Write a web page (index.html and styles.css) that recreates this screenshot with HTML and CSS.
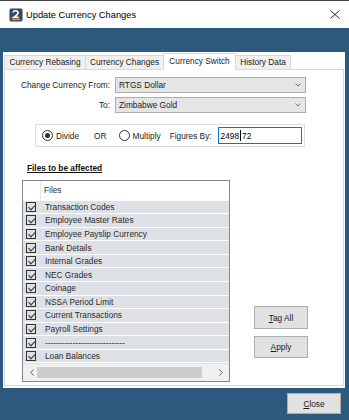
FILE: index.html
```html
<!DOCTYPE html>
<html>
<head>
    <title>Update Currency Changes</title>
    <link rel="stylesheet" href="styles.css">
</head>
<body>
    <div class="window">
        <div class="titlebar">
            <svg class="app-icon" width="14" height="14" viewBox="0 0 14 14">
                <rect x="0.5" y="0.5" width="13" height="13" rx="2" fill="#34495e" stroke="#8fa3b5"/>
                <path d="M4 4.5 Q4.5 2.5 7 2.8 Q9.6 3.2 9 5.4 Q8.4 7 5 9.2 L9.6 9.2" fill="none" stroke="#fff" stroke-width="1.6"/>
                <rect x="3" y="10.4" width="8" height="1.8" fill="#f08a24"/>
            </svg>
            <span class="title">Update Currency Changes</span>
            <svg class="close-x" width="10" height="9" viewBox="0 0 10 9">
                <path d="M0.5 0.5 L9.5 8.5 M9.5 0.5 L0.5 8.5" stroke="#222" stroke-width="1"/>
            </svg>
        </div>
        <div class="band"></div>
        <div class="client">
            <div class="tabs">
                <div class="tab tab-rebasing">Currency Rebasing</div>
                <div class="tab tab-changes">Currency Changes</div>
                <div class="tab tab-switch active">Currency Switch</div>
                <div class="tab tab-history">History Data</div>
            </div>
            <div class="tab-panel">
                <div class="form-row">
                    <span class="form-label">Change Currency From:</span>
                    <div class="combo">
                        <span>RTGS Dollar</span>
                        <svg width="6" height="4" viewBox="0 0 6 4"><path d="M0.5 0.5 L3 3 L5.5 0.5" fill="none" stroke="#707070"/></svg>
                    </div>
                </div>
                <div class="form-row second">
                    <span class="form-label">To:</span>
                    <div class="combo">
                        <span>Zimbabwe Gold</span>
                        <svg width="6" height="4" viewBox="0 0 6 4"><path d="M0.5 0.5 L3 3 L5.5 0.5" fill="none" stroke="#707070"/></svg>
                    </div>
                </div>

                <div class="group">
                    <span class="radio checked"></span>
                    <span class="radio-text">Divide</span>
                    <span class="or-text">OR</span>
                    <span class="radio"></span>
                    <span class="radio-text">Multiply</span>
                    <span class="figures-label">Figures By:</span>
                    <div class="textbox">2498<span class="caret"></span>72</div>
                </div>

                <div class="files-title">Files to be affected</div>

                <div class="files-area">
                    <div class="listview">
                        <div class="lv-header">
                            <div class="lv-check-col"></div>
                            <div class="lv-col">Files</div>
                        </div>
                        <div class="lv-rows">
                            <div class="lv-row"><span class="check"></span>Transaction Codes</div>
                            <div class="lv-row"><span class="check"></span>Employee Master Rates</div>
                            <div class="lv-row"><span class="check"></span>Employee Payslip Currency</div>
                            <div class="lv-row"><span class="check"></span>Bank Details</div>
                            <div class="lv-row"><span class="check"></span>Internal Grades</div>
                            <div class="lv-row"><span class="check"></span>NEC Grades</div>
                            <div class="lv-row"><span class="check"></span>Coinage</div>
                            <div class="lv-row"><span class="check"></span>NSSA Period Limit</div>
                            <div class="lv-row"><span class="check"></span>Current Transactions</div>
                            <div class="lv-row"><span class="check"></span>Payroll Settings</div>
                            <div class="lv-row"><span class="check"></span>-----------------------------</div>
                            <div class="lv-row"><span class="check"></span>Loan Balances</div>
                            <div class="lv-row"></div>
                        </div>
                        <div class="hscroll">
                            <div class="scroll-btn">
                                <svg width="4" height="7" viewBox="0 0 4 7"><path d="M3.5 0.5 L0.8 3.5 L3.5 6.5" fill="none" stroke="#606060"/></svg>
                            </div>
                            <div class="scroll-track"><div class="scroll-thumb"></div></div>
                            <div class="scroll-btn">
                                <svg width="4" height="7" viewBox="0 0 4 7"><path d="M0.5 0.5 L3.2 3.5 L0.5 6.5" fill="none" stroke="#606060"/></svg>
                            </div>
                        </div>
                    </div>
                    <div class="side-buttons">
                        <button class="btn btn-tag"><u>T</u>ag All</button>
                        <button class="btn btn-apply"><u>A</u>pply</button>
                    </div>
                </div>
            </div>
        </div>
        <div class="footer">
            <button class="btn btn-close"><u>C</u>lose</button>
        </div>
    </div>
</body>
</html>
```

FILE: styles.css
```css
* {
    box-sizing: border-box;
}

body {
    margin: 0;
    width: 349px;
    height: 420px;
    overflow: hidden;
    font-family: "Liberation Sans", Arial, sans-serif;
    font-size: 8.3px;
    color: #1a1a1a;
    background: #2b5a7e;
}

.window {
    display: flex;
    flex-direction: column;
    height: 420px;
}

/* Title bar */
.titlebar {
    height: 28px;
    background: #fff;
    border-top: 1px solid #444;
    display: flex;
    align-items: center;
    padding: 0 9px;
}

.title {
    margin-left: 3px;
    font-size: 9.3px;
    color: #000;
}

.close-x {
    margin-left: auto;
}

.band {
    height: 24px;
}

.client {
    margin: 0 4px 0 3px;
    height: 336px;
    background: #fff;
}

/* Tabs */
.tabs {
    display: flex;
    align-items: flex-end;
    height: 17px;
    padding-left: 1px;
}

.tab {
    height: 14px;
    line-height: 13px;
    text-align: center;
    background: #f0f0f0;
    border: 1px solid #d9d9d9;
    border-bottom: none;
    white-space: nowrap;
}

.tab + .tab {
    margin-left: -1px;
}

.tab-rebasing { width: 82px; }
.tab-changes { width: 79px; }
.tab-switch { width: 73px; }
.tab-history { width: 56px; }

.tab.active {
    position: relative;
    height: 17px;
    line-height: 14px;
    margin-bottom: -1px;
    background: #fff;
}

.tab-panel {
    margin: 0 1px;
    height: 317px;
    border: 1px solid #d9d9d9;
}

/* Currency selects */
.form-row {
    display: flex;
    align-items: center;
    margin-top: 7px;
    height: 16px;
}

.form-row.second {
    margin-top: 4px;
}

.form-label {
    width: 105px;
    margin-right: 5px;
    text-align: right;
}

.combo {
    width: 191px;
    height: 16px;
    display: flex;
    align-items: center;
    justify-content: space-between;
    padding: 0 4px 0 3px;
    background: #e5e5e5;
    border: 1px solid #adadad;
}

/* Divide / multiply */
.group {
    display: flex;
    align-items: center;
    margin: 11px 0 0 30px;
    width: 270px;
    height: 23px;
    padding-left: 6px;
    border: 1px solid #dcdcdc;
}

.radio {
    position: relative;
    width: 11px;
    height: 11px;
    border: 1px solid #333;
    border-radius: 50%;
    background: #fff;
}

.radio.checked::after {
    content: "";
    position: absolute;
    left: 2px;
    top: 2px;
    width: 5px;
    height: 5px;
    border-radius: 50%;
    background: #333;
}

.radio-text {
    margin-left: 3px;
}

.or-text {
    margin: 0 12px 0 15px;
}

.figures-label {
    margin: 0 6px 0 9px;
}

.textbox {
    display: flex;
    align-items: center;
    width: 84px;
    height: 17px;
    padding-left: 2px;
    border: 1px solid #0078d7;
    background: #fff;
    color: #000;
}

.caret {
    width: 1px;
    height: 11px;
    margin: 0 1px;
    background: #000;
}

.files-title {
    margin: 15px 0 0 22px;
    line-height: 12px;
    font-weight: bold;
    text-decoration: underline;
    color: #111;
}

/* File list */
.files-area {
    display: flex;
    margin-top: 6px;
}

.listview {
    margin-left: 17px;
    width: 208px;
    height: 202px;
    border: 1px solid #828790;
    display: flex;
    flex-direction: column;
}

.lv-header {
    display: flex;
    height: 19.5px;
    flex-shrink: 0;
}

.lv-check-col {
    width: 18px;
    border-right: 1px solid #e5e5e5;
}

.lv-col {
    padding-left: 3px;
    line-height: 19px;
    color: #333;
}

.lv-rows {
    height: 163.5px;
    overflow: hidden;
    flex-shrink: 0;
}

.lv-row {
    display: flex;
    align-items: center;
    height: 13.58px;
    padding-left: 3px;
    background: #dde1e6;
    border-bottom: 1px solid #fff;
    color: #2a2a2a;
    white-space: nowrap;
}

.check {
    position: relative;
    width: 10px;
    height: 10px;
    margin-right: 9px;
    border: 1px solid #333;
}

.check::after {
    content: "";
    position: absolute;
    left: 2.5px;
    top: 0;
    width: 3px;
    height: 6px;
    border-right: 1px solid #333;
    border-bottom: 1px solid #333;
    transform: rotate(45deg);
}

.hscroll {
    display: flex;
    height: 17px;
    background: #f0f0f0;
}

.scroll-btn {
    width: 17px;
    display: flex;
    align-items: center;
    justify-content: center;
}

.scroll-track {
    flex: 1;
    padding-top: 3px;
}

.scroll-thumb {
    margin-left: -3px;
    width: 165px;
    height: 11px;
    background: #cdcdcd;
}

/* Buttons */
.side-buttons {
    display: flex;
    flex-direction: column;
    justify-content: flex-end;
    gap: 7px;
    margin-left: 24px;
    padding-bottom: 24px;
}

.btn {
    width: 54px;
    padding: 0;
    font-family: "Liberation Sans", Arial, sans-serif;
    font-size: 8.3px;
    color: #1a1a1a;
    background: #e1e1e1;
    border: 1px solid #adadad;
}

.btn-tag { height: 23px; }
.btn-apply { height: 22px; }

.footer {
    height: 32px;
    display: flex;
    justify-content: flex-end;
    padding: 5px 8px 0 0;
}

.btn-close {
    height: 21px;
}
```
